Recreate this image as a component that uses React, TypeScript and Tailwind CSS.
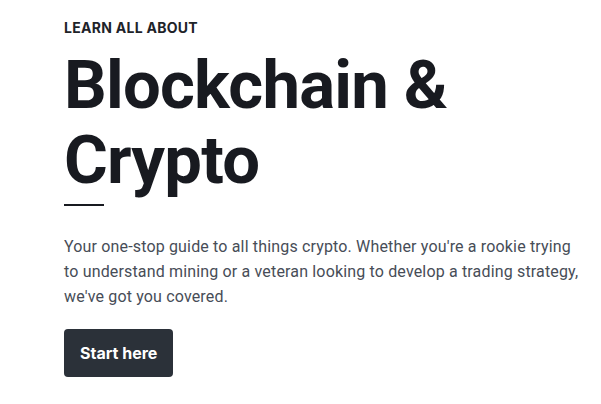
export default function App() {
  return (
    <div className="min-h-[404px] w-full bg-white font-['Inter',sans-serif] text-[#1e2329]">
      <div className="px-16 pt-[18px]">
        {/* eyebrow */}
        <p className="text-[14px] font-bold leading-[20px] tracking-[0.02em]">LEARN ALL ABOUT</p>

        {/* heading */}
        <h1 className="mt-[10px] font-['Roboto',sans-serif] text-[67px] font-bold leading-[75px] tracking-[-0.012em] text-[#181a20]">
          Blockchain &amp;
          <br />
          Crypto
        </h1>

        <div className="mt-[6px] h-[2px] w-10 bg-[#181a20]" />

        {/* copy */}
        <p className="mt-[28px] w-[520px] font-['Roboto',sans-serif] text-[16px] leading-[25px] tracking-[0.01em] text-[#474d57]">
          Your one-stop guide to all things crypto. Whether you're a rookie trying to understand mining or a
          veteran looking to develop a trading strategy, we've got you covered.
        </p>

        <button className="mt-[20px] flex h-12 items-center rounded-[4px] bg-[#2b3139] px-4 text-[16px] font-bold text-white">
          Start here
        </button>
      </div>
    </div>
  );
}
